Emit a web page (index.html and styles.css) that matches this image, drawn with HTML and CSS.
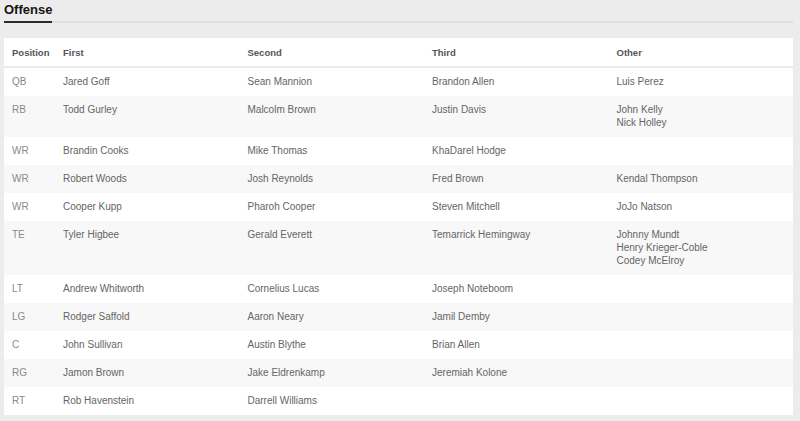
FILE: index.html
```html
<!DOCTYPE html>
<html>
<head>
<meta charset="utf-8">
<link rel="stylesheet" href="styles.css">
</head>
<body>
<div class="page">
  <div class="section-head">
    <h2 class="title">Offense</h2>
  </div>
  <div class="card">
    <table class="depth">
      <thead>
        <tr><th class="pos">Position</th><th>First</th><th>Second</th><th>Third</th><th>Other</th></tr>
      </thead>
      <tbody>
        <tr><td class="pos">QB</td><td>Jared Goff</td><td>Sean Mannion</td><td>Brandon Allen</td><td>Luis Perez</td></tr>
        <tr><td class="pos">RB</td><td>Todd Gurley</td><td>Malcolm Brown</td><td>Justin Davis</td><td>John Kelly<br>Nick Holley</td></tr>
        <tr><td class="pos">WR</td><td>Brandin Cooks</td><td>Mike Thomas</td><td>KhaDarel Hodge</td><td></td></tr>
        <tr><td class="pos">WR</td><td>Robert Woods</td><td>Josh Reynolds</td><td>Fred Brown</td><td>Kendal Thompson</td></tr>
        <tr><td class="pos">WR</td><td>Cooper Kupp</td><td>Pharoh Cooper</td><td>Steven Mitchell</td><td>JoJo Natson</td></tr>
        <tr><td class="pos">TE</td><td>Tyler Higbee</td><td>Gerald Everett</td><td>Temarrick Hemingway</td><td>Johnny Mundt<br>Henry Krieger-Coble<br>Codey McElroy</td></tr>
        <tr><td class="pos">LT</td><td>Andrew Whitworth</td><td>Cornelius Lucas</td><td>Joseph Noteboom</td><td></td></tr>
        <tr><td class="pos">LG</td><td>Rodger Saffold</td><td>Aaron Neary</td><td>Jamil Demby</td><td></td></tr>
        <tr><td class="pos">C</td><td>John Sullivan</td><td>Austin Blythe</td><td>Brian Allen</td><td></td></tr>
        <tr><td class="pos">RG</td><td>Jamon Brown</td><td>Jake Eldrenkamp</td><td>Jeremiah Kolone</td><td></td></tr>
        <tr><td class="pos">RT</td><td>Rob Havenstein</td><td>Darrell Williams</td><td></td><td></td></tr>
      </tbody>
    </table>
  </div>
</div>
</body>
</html>
```

FILE: styles.css
```css
html, body {
  margin: 0;
  padding: 0;
  background: #ececec;
  font-family: "Liberation Sans", Arial, sans-serif;
}
.page {
  padding: 0 7px 0 4px;
  width: 789px;
  height: 421px;
  box-sizing: content-box;
}
.section-head {
  border-bottom: 2px solid #dedede;
  height: 21px;
  display: flex;
  align-items: flex-end;
}
.title {
  margin: 0 0 -2px 0;
  font-size: 13px;
  font-weight: bold;
  color: #151515;
  line-height: 15px;
  padding-bottom: 4px;
  border-bottom: 2px solid #2a2a2a;
}
.card {
  margin-top: 15px;
  background: #fff;
}
.depth {
  width: 100%;
  border-collapse: collapse;
  table-layout: fixed;
}
.depth th, .depth td {
  text-align: left;
  padding: 7px 8px 8px 8px;
  vertical-align: top;
  line-height: 13px;
}
.depth th {
  font-size: 9.5px;
  font-weight: bold;
  color: #555;
  padding: 8px 8px 7px 8px;
  border-bottom: 2px solid #ebebeb;
}
.depth td {
  font-size: 10px;
  color: #656565;
}
.depth th.pos, .depth td.pos {
  width: 35px;
}
.depth td.pos {
  color: #8a8a8a;
}
.depth tbody tr:nth-child(even) {
  background: #f8f8f8;
}
```
